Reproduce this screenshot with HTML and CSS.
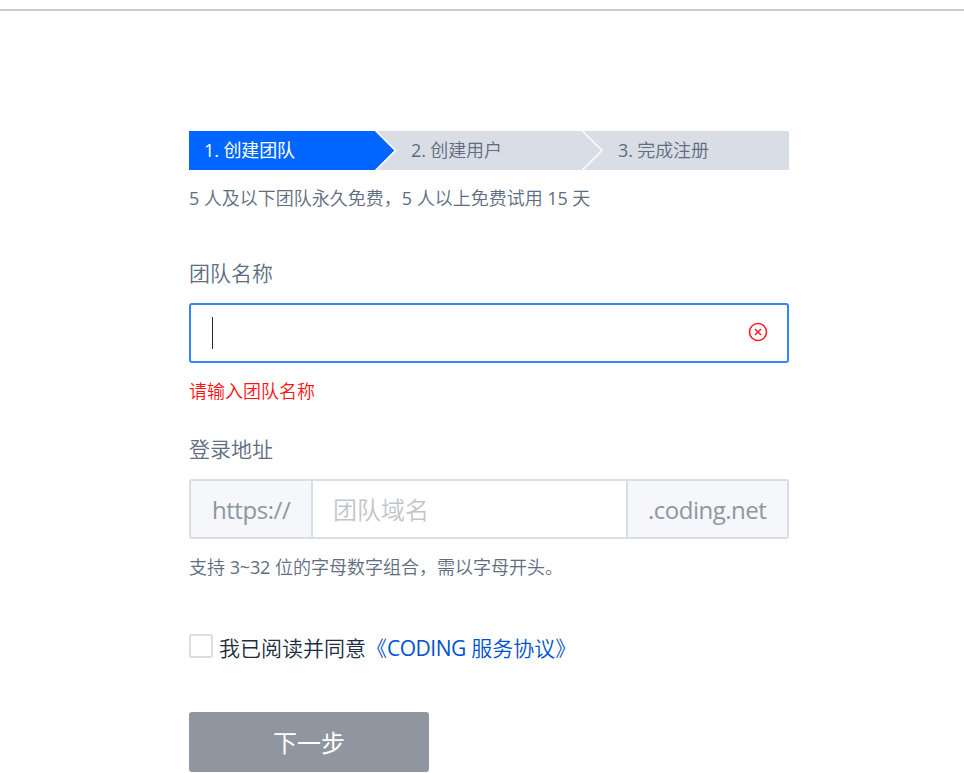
FILE: index.html
```html
<!DOCTYPE html>
<html lang="zh-CN">
<head>
<meta charset="utf-8">
<title>创建团队</title>
<link rel="stylesheet" href="styles.css">
</head>
<body>
<header class="topbar"></header>
<main class="register">
  <ol class="steps">
    <li class="step step-active"><span>1. 创建团队</span><svg class="arrow" viewBox="0 0 22 39"><path class="arrow-fill" d="M0 0L19.5 19.5L0 39Z"/><path class="arrow-line" d="M0.5 -0.5L20.5 19.5L0.5 39.5"/></svg></li>
    <li class="step"><span><span class="latin">2.</span> 创建用户</span><svg class="arrow" viewBox="0 0 22 39"><path class="arrow-line" d="M0 -0.5L20 19.5L0 39.5"/></svg></li>
    <li class="step"><span><span class="latin">3.</span> 完成注册</span></li>
  </ol>
  <p class="note"><span class="latin">5</span> 人及以下团队永久免费，<span class="latin">5</span> 人以上免费试用 <span class="latin">15</span> 天</p>
  <label class="label">团队名称</label>
  <div class="field field-focus">
    <span class="caret"></span>
    <svg class="clear" viewBox="0 0 20 20"><circle cx="10" cy="10" r="8.5"/><path d="M7 7L13 13M13 7L7 13"/></svg>
  </div>
  <p class="note error">请输入团队名称</p>
  <label class="label label-domain">登录地址</label>
  <div class="field domain">
    <span class="addon addon-left">https://</span>
    <span class="placeholder">团队域名</span>
    <span class="addon addon-right">.coding.net</span>
  </div>
  <p class="note hint">支持 <span class="latin">3~32</span> 位的字母数字组合，需以字母开头。</p>
  <div class="agree">
    <span class="checkbox"></span>
    <span class="agree-text">我已阅读并同意</span><a class="link">《<span class="brand">CODING</span> 服务协议》</a>
  </div>
  <button class="submit">下一步</button>
</main>
</body>
</html>
```
FILE: styles.css
```css
* { box-sizing: border-box; }
body {
  margin: 0;
  height: 773px;
  overflow: hidden;
  background: #fff;
  color: #202d40;
  font-family: "Open Sans", "Noto Sans CJK SC", sans-serif;
  font-weight: 350;
}
.latin { font-weight: 400; letter-spacing: -0.15px; }
.topbar { height: 11px; border-bottom: 2px solid #ccc; }
.register { width: 600px; margin: 120px 0 0 189px; }
.steps { display: flex; height: 39px; margin: 0; padding: 0; list-style: none; background: #d8dde6; color: #606c80; }
.step { position: relative; flex: 0 0 207px; padding-left: 15px; font-size: 18px; line-height: 39px; letter-spacing: -0.1px; white-space: nowrap; }
.step:last-child { flex: 0 0 186px; }
.step-active { flex-basis: 186px; background: #06f; color: #fff; font-weight: 400; }
.step + .step { padding-left: 36px; }
.arrow { position: absolute; left: 100%; top: 0; width: 22px; height: 39px; z-index: 1; }
.arrow-fill { fill: #06f; }
.arrow-line { fill: none; stroke: #fff; stroke-width: 1.4; }
.note { margin: 13px 0 0; font-size: 18px; line-height: 30px; color: #606c80; white-space: nowrap; }
.label { display: block; height: 30px; margin: 45px 0 15px; font-size: 21px; line-height: 30px; color: #606c80; }
.field { display: flex; align-items: center; height: 60px; border: 2px solid #d8dde6; border-radius: 3px; font-size: 24px; }
.field-focus { justify-content: space-between; padding: 0 19.5px 0 21px; border-color: #3385ff; }
.caret { width: 1px; height: 32px; background: #202d40; }
.clear { width: 20px; height: 20px; margin-top: -2px; fill: none; stroke: #f5222d; stroke-width: 1.6; }
.error { margin-top: 14px; line-height: 29px; color: #ff1414; }
.label-domain { margin-top: 28px; margin-bottom: 15px; line-height: 31px; }
.addon { height: 100%; background: #f5f7fa; color: #8f96a0; font-weight: 400; line-height: 58px; }
.addon-left { width: 122px; padding-left: 21px; border-right: 2px solid #d8dde6; letter-spacing: -0.45px; }
.addon-right { width: 161px; padding-left: 20px; border-left: 2px solid #d8dde6; letter-spacing: -0.5px; }
.placeholder { flex: 1; padding-left: 20px; line-height: 56px; padding-top: 2px; color: #c1c5cb; }
.agree { display: flex; align-items: center; height: 30px; margin-top: 51px; font-size: 21px; line-height: 30px; white-space: pre; }
.checkbox { width: 24px; height: 24px; margin: -4px 6px 0 0; border: 2px solid #d8dde6; border-radius: 3px; }
.link { color: #0052cc; }
.brand { font-weight: 400; letter-spacing: -0.5px; }
.submit { display: block; width: 240px; height: 60px; margin-top: 49px; padding: 0 0 2px; border: 0; border-radius: 3px; background: #8f96a0; color: #fff; font: inherit; font-size: 24px; font-weight: 400; }
```
